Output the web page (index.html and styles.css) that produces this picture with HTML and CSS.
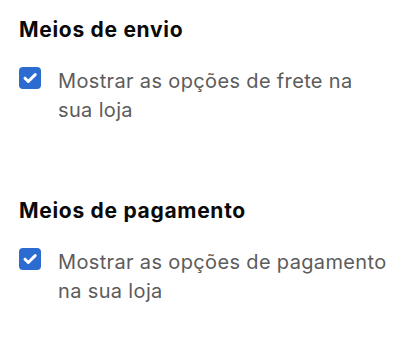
FILE: index.html
```
<!DOCTYPE html>
<html lang="pt">
<head>
<meta charset="utf-8">
<link rel="stylesheet" href="styles.css">
</head>
<body>
<main class="page">
  <section class="group">
    <h2 class="title">Meios de envio</h2>
    <label class="option">
      <span class="box"><svg viewBox="0 0 22 22" width="22" height="22"><path d="M6 11.2l3.3 3.3L16.2 7.6" fill="none" stroke="#fff" stroke-width="3" stroke-linecap="round" stroke-linejoin="round"/></svg></span>
      <span class="text">Mostrar as opções de frete na sua loja</span>
    </label>
  </section>
  <section class="group">
    <h2 class="title">Meios de pagamento</h2>
    <label class="option">
      <span class="box"><svg viewBox="0 0 22 22" width="22" height="22"><path d="M6 11.2l3.3 3.3L16.2 7.6" fill="none" stroke="#fff" stroke-width="3" stroke-linecap="round" stroke-linejoin="round"/></svg></span>
      <span class="text">Mostrar as opções de pagamento na sua loja</span>
    </label>
  </section>
</main>
</body>
</html>
```
FILE: styles.css
```
html, body { margin: 0; padding: 0; background: #fff; }
.page {
  font-family: Inter, "Noto Sans", sans-serif;
  padding: 17px 10px 0 19px;
  display: flex;
  flex-direction: column;
  gap: 73px;
}
.group { display: flex; flex-direction: column; gap: 24px; }
.title {
  margin: 0;
  font-size: 21px;
  line-height: 26px;
  font-weight: 700;
  letter-spacing: 0.7px;
  color: #0a0a0a;
}
.option { display: flex; gap: 17px; align-items: flex-start; }
.box {
  flex: none;
  width: 22px; height: 22px;
  border-radius: 4px;
  background: #2c6bd0;
  display: flex;
}
.text {
  font-size: 20px;
  line-height: 29px;
  letter-spacing: 0.35px;
  color: #5c5c5c;
  max-width: 330px;
}
```
